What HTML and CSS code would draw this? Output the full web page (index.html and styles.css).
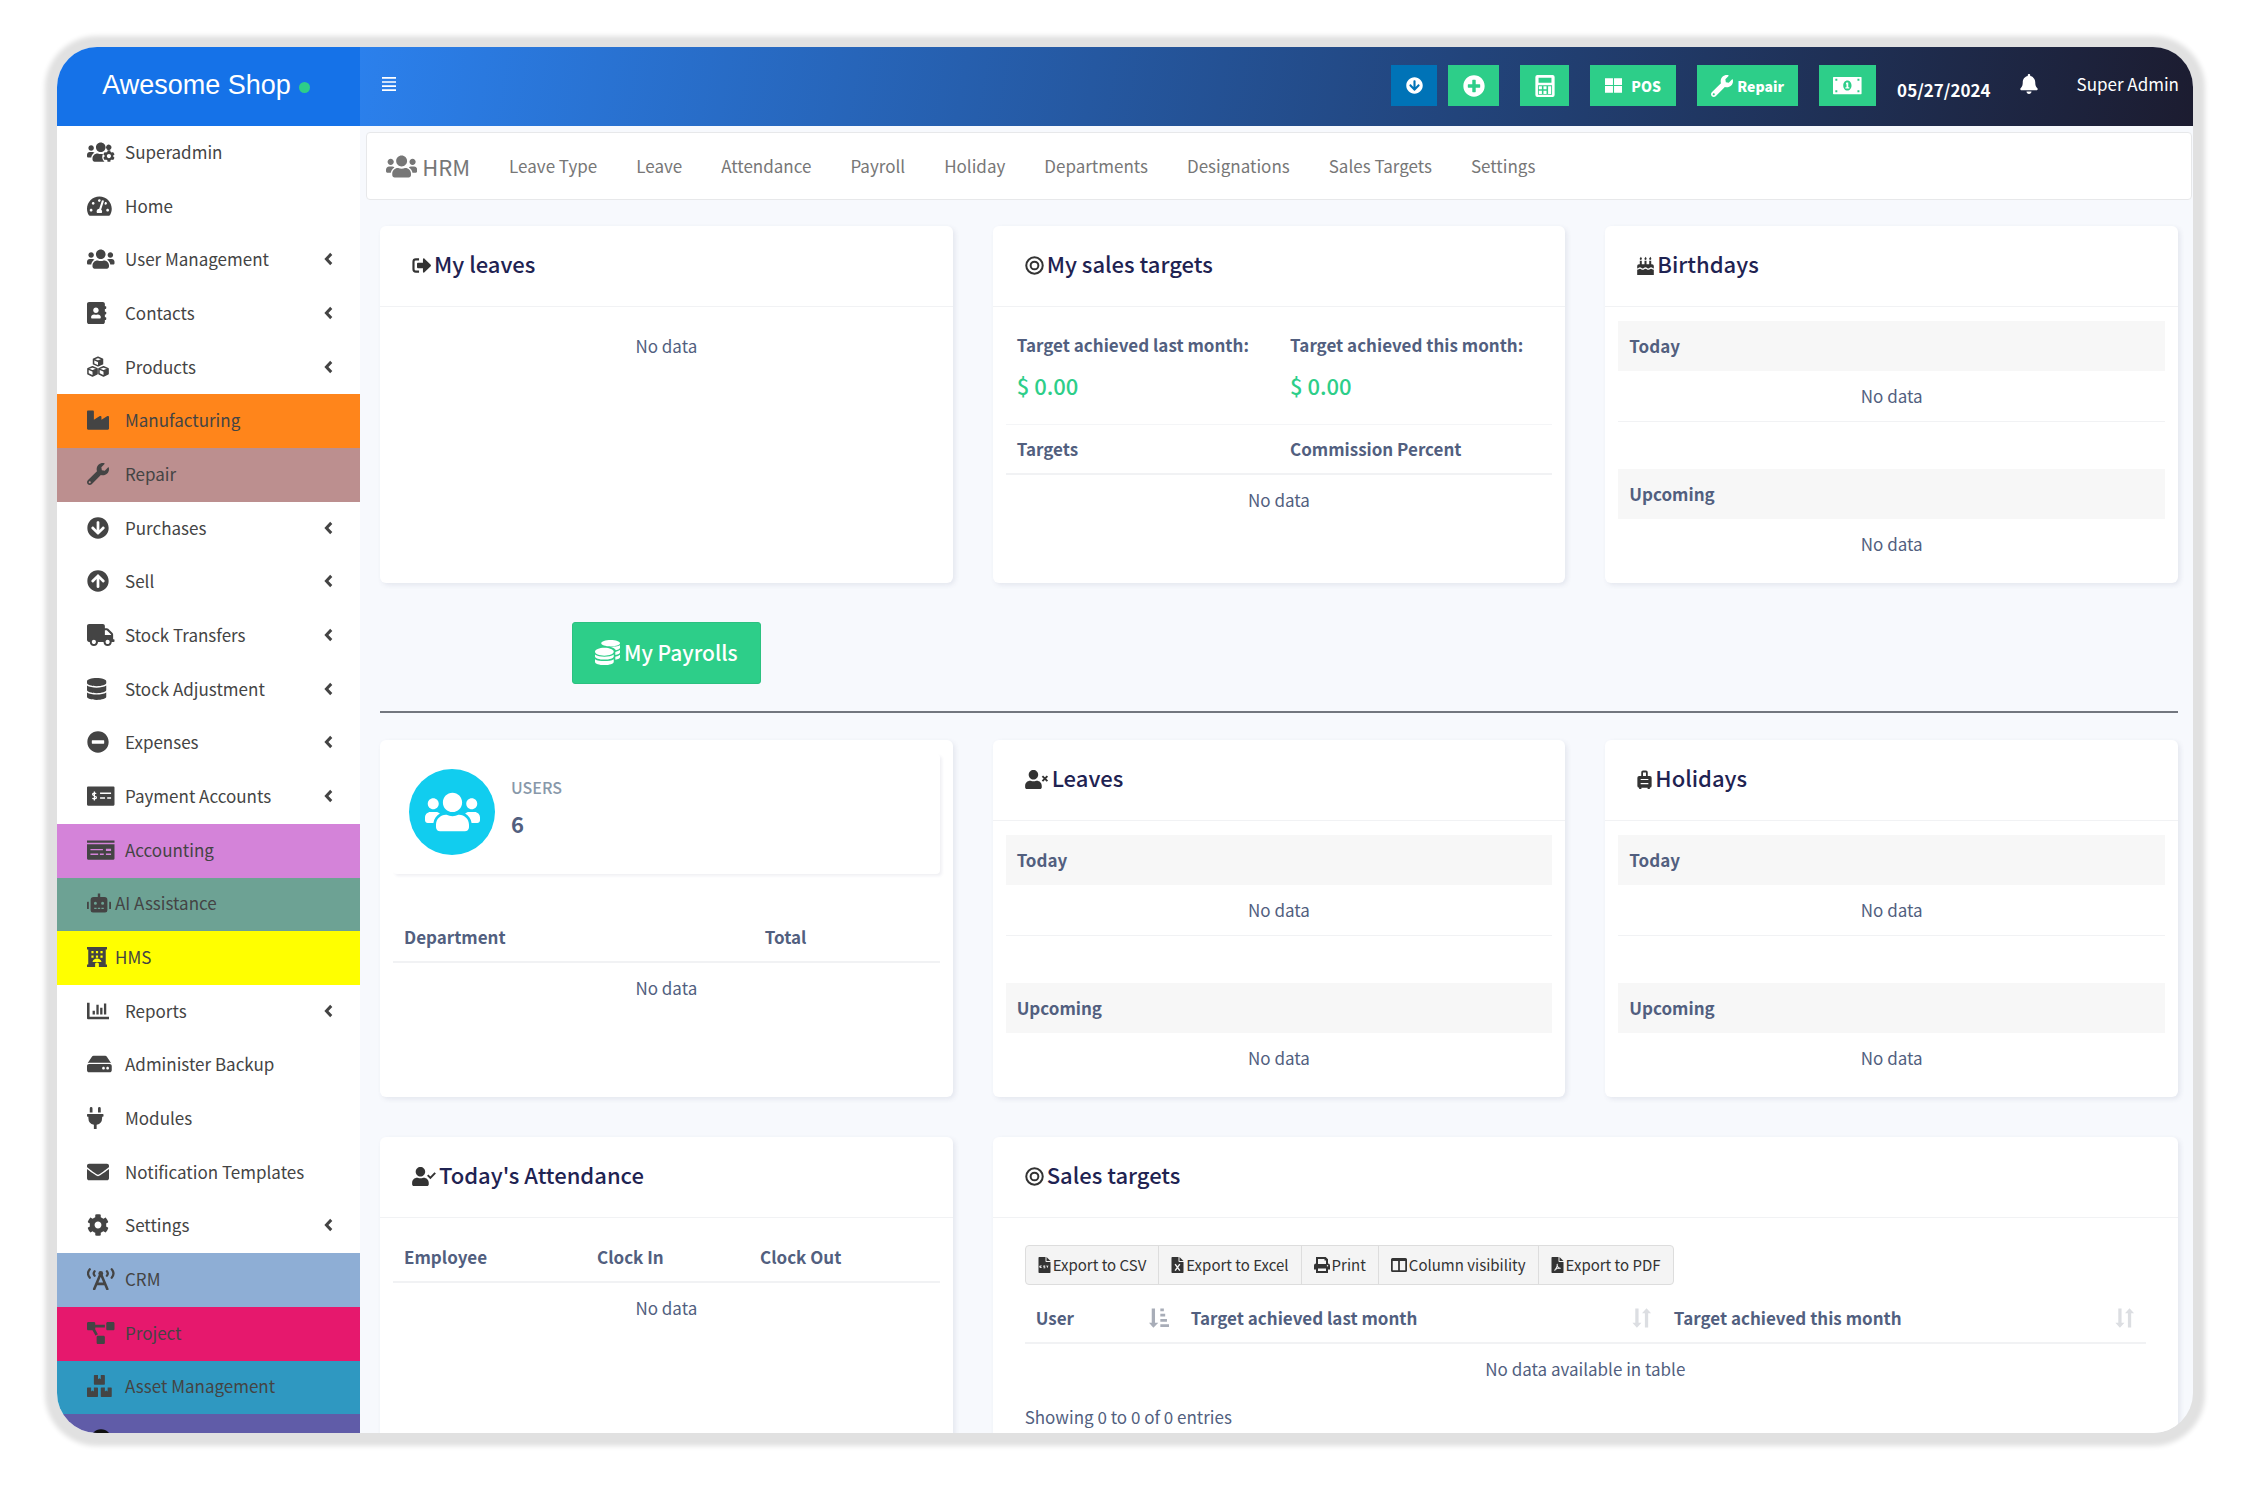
FILE: index.html
```html
<!DOCTYPE html>
<html lang="en">
<head>
<meta charset="utf-8">
<title>HRM - Awesome Shop</title>
<meta name="viewport" content="width=device-width, initial-scale=1">
<link rel="stylesheet" href="styles.css">
</head>
<body>
<svg class="sprite" aria-hidden="true">
  <symbol id="users" viewBox="0 0 640 512" preserveAspectRatio="xMinYMid meet"><path d="M96 224c35.3 0 64-28.7 64-64s-28.7-64-64-64-64 28.7-64 64 28.7 64 64 64zm448 0c35.3 0 64-28.7 64-64s-28.7-64-64-64-64 28.7-64 64 28.7 64 64 64zm32 32h-64c-17.6 0-33.5 7.1-45.1 18.6 40.3 22.1 68.9 62 75.1 109.4h66c17.7 0 32-14.3 32-32v-32c0-35.3-28.7-64-64-64zm-256 0c61.9 0 112-50.1 112-112S381.9 32 320 32 208 82.1 208 144s50.1 112 112 112zm76.8 32h-8.3c-20.8 10-43.9 16-68.5 16s-47.6-6-68.5-16h-8.3C179.6 288 128 339.6 128 403.2V432c0 26.5 21.5 48 48 48h288c26.5 0 48-21.5 48-48v-28.8c0-63.6-51.6-115.2-115.2-115.2zm-223.7-13.4C161.5 263.1 145.6 256 128 256H64c-35.3 0-64 28.7-64 64v32c0 17.7 14.3 32 32 32h65.9c6.3-47.4 34.9-87.3 75.2-109.4z"/></symbol>
  <symbol id="users-cog" viewBox="0 0 640 512" preserveAspectRatio="xMinYMid meet"><path d="M96 224c35.3 0 64-28.7 64-64s-28.7-64-64-64-64 28.7-64 64 28.7 64 64 64zM320 256c61.9 0 112-50.1 112-112S381.9 32 320 32 208 82.1 208 144s50.1 112 112 112zM173.1 274.6C161.5 263.1 145.6 256 128 256H64c-35.3 0-64 28.7-64 64v32c0 17.7 14.3 32 32 32h65.9c6.3-47.4 34.9-87.3 75.2-109.4zM370 300c-16 3-32 4-50 4-24.6 0-47.6-6-68.5-16h-8.3C179.6 288 128 339.6 128 403.2V432c0 26.5 21.5 48 48 48h230c-30-30-46-62-52-98 0-32 4-54 16-82zM544 96a64 64 0 1 0 0 104 64 64 0 0 0 0-104z"/><path transform="translate(372 212) scale(.54)" d="M487.4 315.7l-42.6-24.6c4.3-23.2 4.3-47 0-70.2l42.6-24.6c4.9-2.8 7.1-8.6 5.5-14-11.1-35.6-30-67.8-54.7-94.6-3.8-4.1-10-5.1-14.8-2.3L380.8 110c-17.9-15.4-38.5-27.3-60.8-35.1V25.8c0-5.6-3.9-10.5-9.4-11.7-36.7-8.2-74.3-7.8-109.2 0-5.5 1.2-9.4 6.1-9.4 11.7V75c-22.2 7.9-42.8 19.8-60.8 35.1L88.7 85.5c-4.9-2.8-11-1.9-14.8 2.3-24.7 26.7-43.6 58.9-54.7 94.6-1.7 5.4.6 11.2 5.5 14L67.3 221c-4.3 23.2-4.3 47 0 70.2l-42.6 24.6c-4.9 2.8-7.1 8.6-5.5 14 11.1 35.6 30 67.8 54.7 94.6 3.8 4.1 10 5.1 14.8 2.3l42.6-24.6c17.9 15.4 38.5 27.3 60.8 35.1v49.2c0 5.6 3.9 10.5 9.4 11.7 36.7 8.2 74.3 7.8 109.2 0 5.5-1.2 9.4-6.1 9.4-11.7v-49.2c22.2-7.9 42.8-19.8 60.8-35.1l42.6 24.6c4.9 2.8 11 1.9 14.8-2.3 24.7-26.7 43.6-58.9 54.7-94.6 1.5-5.5-.7-11.3-5.6-14.1zM256 346c-50 0-90-40-90-90s40-90 90-90 90 40 90 90-40 90-90 90z"/></symbol>
  <symbol id="gauge" viewBox="0 0 576 512" preserveAspectRatio="xMinYMid meet"><path d="M288 32C128.940 32 0 160.940 0 320c0 52.800 14.250 102.260 39.060 144.800 5.610 9.620 16.300 15.200 27.440 15.200h443c11.140 0 21.830-5.580 27.440-15.200C561.750 422.260 576 372.800 576 320c0-159.060-128.940-288-288-288zm0 64c14.710 0 26.580 10.130 30.320 23.650-1.110 2.260-2.640 4.230-3.450 6.670l-9.220 27.670c-5.130 3.490-10.970 6.010-17.640 6.010-17.670 0-32-14.330-32-32S270.330 96 288 96zM96 384c-17.670 0-32-14.330-32-32s14.330-32 32-32 32 14.330 32 32-14.330 32-32 32zm48-160c-17.670 0-32-14.330-32-32s14.330-32 32-32 32 14.330 32 32-14.330 32-32 32zm246.770-72.410l-61.330 184C343.130 347.330 352 364.540 352 384c0 11.720-3.380 22.550-8.880 32H232.880c-5.500-9.450-8.880-20.280-8.880-32 0-33.940 26.500-61.430 59.900-63.590l61.340-184.010c4.170-12.560 17.730-19.450 30.360-15.170 12.570 4.190 19.350 17.790 15.170 30.360zm14.660 57.200l15.520-46.550c3.470-1.290 7.130-2.230 11.050-2.230 17.670 0 32 14.330 32 32s-14.330 32-32 32c-11.380-.01-20.890-6.280-26.570-15.220zM480 384c-17.670 0-32-14.330-32-32s14.330-32 32-32 32 14.330 32 32-14.330 32-32 32z"/></symbol>
  <symbol id="address-book" viewBox="0 0 448 512" preserveAspectRatio="xMinYMid meet"><path d="M436 160c6.600 0 12-5.400 12-12v-40c0-6.600-5.400-12-12-12h-20V48c0-26.500-21.500-48-48-48H48C21.500 0 0 21.500 0 48v416c0 26.500 21.500 48 48 48h320c26.500 0 48-21.500 48-48v-48h20c6.600 0 12-5.400 12-12v-40c0-6.600-5.400-12-12-12h-20v-64h20c6.600 0 12-5.400 12-12v-40c0-6.600-5.400-12-12-12h-20v-64h20zm-228-32c35.300 0 64 28.700 64 64s-28.700 64-64 64-64-28.700-64-64 28.700-64 64-64zm112 236.800c0 10.600-10 19.200-22.400 19.200H118.400C106 384 96 375.400 96 364.800v-19.200c0-31.800 30.100-57.600 67.200-57.600h5c12.300 5.100 25.700 8 39.800 8s27.600-2.900 39.800-8h5c37.100 0 67.200 25.800 67.200 57.600v19.200z"/></symbol>
  <symbol id="cubes" viewBox="0 0 512 512" preserveAspectRatio="xMinYMid meet"><g fill="none" stroke="currentColor" stroke-width="36" stroke-linejoin="round"><path d="M256 30l104 42v112l-104 46-104-46V72zM152 78l104 44 104-44"/><path d="M128 250l106 44v118l-106 52-106-52V294zM22 300l106 46 106-46"/><path d="M384 250l106 44v118l-106 52-106-52V294zM278 300l106 46 106-46"/></g><path d="M256 126l104-46v104l-104 46zM128 350l106-48v110l-106 52zM384 350l106-48v110l-106 52z"/></symbol>
  <symbol id="industry" viewBox="0 0 512 512" preserveAspectRatio="xMinYMid meet"><path d="M475.115 163.781L336 252.309v-68.280c0-18.916-20.931-30.399-36.885-20.248L160 252.309V56c0-13.255-10.745-24-24-24H24C10.745 32 0 42.745 0 56v400c0 13.255 10.745 24 24 24h464c13.255 0 24-10.745 24-24V184.029c0-18.917-20.931-30.399-36.885-20.248z"/></symbol>
  <symbol id="wrench" viewBox="0 0 512 512" preserveAspectRatio="xMinYMid meet"><path d="M507.730 109.100c-2.240-9.030-13.540-12.090-20.120-5.510l-74.360 74.360-67.880-11.310-11.310-67.880 74.360-74.360c6.620-6.620 3.430-17.900-5.660-20.160-47.380-11.740-99.550.91-136.580 37.930-39.640 39.640-50.550 97.100-34.050 147.200L18.740 402.760c-24.990 24.990-24.990 65.510 0 90.500 24.990 24.990 65.510 24.990 90.500 0l213.210-213.210c50.120 16.710 107.470 5.680 147.370-34.220 37.070-37.070 49.700-89.320 37.910-136.730zM64 472c-13.250 0-24-10.750-24-24 0-13.260 10.750-24 24-24s24 10.740 24 24c0 13.250-10.750 24-24 24z"/></symbol>
  <symbol id="arrow-down" viewBox="0 0 512 512" preserveAspectRatio="xMinYMid meet"><path d="M504 256c0 137-111 248-248 248S8 393 8 256 119 8 256 8s248 111 248 248zm-143.600-28.900L288 302.600V120c0-13.300-10.700-24-24-24h-16c-13.300 0-24 10.700-24 24v182.600l-72.400-75.500c-9.300-9.700-24.800-9.900-34.300-.4l-10.900 11c-9.400 9.400-9.400 24.600 0 33.900L239 404.300c9.400 9.400 24.600 9.400 33.900 0l132.700-132.700c9.400-9.400 9.400-24.600 0-33.900l-10.900-11c-9.500-9.500-25-9.300-34.300.4z"/></symbol>
  <symbol id="arrow-up" viewBox="0 0 512 512" preserveAspectRatio="xMinYMid meet"><path transform="rotate(180 256 256)" d="M504 256c0 137-111 248-248 248S8 393 8 256 119 8 256 8s248 111 248 248zm-143.600-28.900L288 302.600V120c0-13.300-10.700-24-24-24h-16c-13.300 0-24 10.700-24 24v182.600l-72.400-75.500c-9.300-9.700-24.800-9.900-34.300-.4l-10.900 11c-9.400 9.400-9.400 24.600 0 33.900L239 404.300c9.400 9.400 24.600 9.400 33.900 0l132.700-132.700c9.400-9.400 9.400-24.600 0-33.900l-10.900-11c-9.500-9.500-25-9.300-34.300.4z"/></symbol>
  <symbol id="truck" viewBox="0 0 640 512" preserveAspectRatio="xMinYMid meet"><path d="M624 352h-16V243.900c0-12.700-5.100-24.900-14.100-33.900L494 110.100c-9-9-21.200-14.100-33.900-14.100H416V48c0-26.500-21.500-48-48-48H48C21.500 0 0 21.500 0 48v320c0 26.500 21.500 48 48 48h16c0 53 43 96 96 96s96-43 96-96h128c0 53 43 96 96 96s96-43 96-96h48c8.800 0 16-7.200 16-16v-32c0-8.800-7.200-16-16-16zM160 464c-26.500 0-48-21.500-48-48s21.500-48 48-48 48 21.500 48 48-21.500 48-48 48zm320 0c-26.500 0-48-21.500-48-48s21.500-48 48-48 48 21.500 48 48-21.500 48-48 48zm80-208H416V144h44.100l99.900 99.900V256z"/></symbol>
  <symbol id="database" viewBox="0 0 448 512" preserveAspectRatio="xMinYMid meet"><path d="M448 73.143v45.714C448 159.143 347.667 192 224 192S0 159.143 0 118.857V73.143C0 32.857 100.333 0 224 0s224 32.857 224 73.143zM448 176v102.857C448 319.143 347.667 352 224 352S0 319.143 0 278.857V176c48.125 33.143 136.208 48.572 224 48.572S399.874 209.143 448 176zm0 160v102.857C448 479.143 347.667 512 224 512S0 479.143 0 438.857V336c48.125 33.143 136.208 48.572 224 48.572S399.874 369.143 448 336z"/></symbol>
  <symbol id="minus" viewBox="0 0 512 512" preserveAspectRatio="xMinYMid meet"><path d="M256 8C119 8 8 119 8 256s111 248 248 248 248-111 248-248S393 8 256 8zM124 296c-6.600 0-12-5.400-12-12v-56c0-6.600 5.400-12 12-12h264c6.600 0 12 5.400 12 12v56c0 6.600-5.400 12-12 12H124z"/></symbol>
  <symbol id="plus" viewBox="0 0 512 512" preserveAspectRatio="xMinYMid meet"><path d="M256 8C119 8 8 119 8 256s111 248 248 248 248-111 248-248S393 8 256 8zm144 276c0 6.600-5.400 12-12 12h-92v92c0 6.600-5.400 12-12 12h-56c-6.600 0-12-5.400-12-12v-92h-92c-6.600 0-12-5.400-12-12v-56c0-6.600 5.400-12 12-12h92v-92c0-6.600 5.400-12 12-12h56c6.600 0 12 5.400 12 12v92h92c6.600 0 12 5.400 12 12v56z"/></symbol>
  <symbol id="check-money" viewBox="0 0 640 512" preserveAspectRatio="xMinYMid meet"><path fill-rule="evenodd" d="M24 32h592a24 24 0 0 1 24 24v400a24 24 0 0 1-24 24H24a24 24 0 0 1-24-24V56a24 24 0 0 1 24-24zM304 176v36h256v-36zM304 286v36h116v-36zM470 286v36h90v-36z"/><path d="M214 200c-14-16-84-22-84 18 0 42 88 22 88 70 0 40-76 38-92 16M172 150v210" fill="none" stroke="#fff" stroke-width="30"/></symbol>
  <symbol id="money-check" viewBox="0 0 640 512" preserveAspectRatio="xMinYMid meet"><path fill-rule="evenodd" d="M0 32h640v56H0zM0 122h640v334a24 24 0 0 1-24 24H24a24 24 0 0 1-24-24zM80 230v32h290v-32zM80 340v32h180v-32zM300 340v32h90v-32zM440 224v56h120v-56zM440 340v32h120v-32z"/></symbol>
  <symbol id="robot" viewBox="0 0 640 512" preserveAspectRatio="xMinYMid meet"><path fill-rule="evenodd" d="M16 224h32v192H16a16 16 0 0 1-16-16V240a16 16 0 0 1 16-16zM592 224h32a16 16 0 0 1 16 16v160a16 16 0 0 1-16 16h-32zM288 0h64v96h112a80 80 0 0 1 80 80v272a64 64 0 0 1-64 64H160a64 64 0 0 1-64-64V176a80 80 0 0 1 80-80h112zM224 224a40 40 0 1 0 0 80 40 40 0 0 0 0-80zM416 224a40 40 0 1 0 0 80 40 40 0 0 0 0-80zM192 384v32h64v-32zM288 384v32h64v-32zM384 384v32h64v-32z"/></symbol>
  <symbol id="hotel" viewBox="0 0 512 512" preserveAspectRatio="xMinYMid meet"><path fill-rule="evenodd" d="M0 0h512v64h-32v384h32v64H304v-90c-18-30-78-30-96 0v90H0v-64h32V64H0zM112 104v56h56v-56zM228 104v56h56v-56zM344 104v56h56v-56zM112 216v56h56v-56zM228 216v56h56v-56zM344 216v56h56v-56zM140 384h232c-10-60-60-92-116-92s-106 32-116 92z"/></symbol>
  <symbol id="chart" viewBox="0 0 512 512" preserveAspectRatio="xMinYMid meet"><path d="M0 64h60v324h452v60H24a24 24 0 0 1-24-24zM130 250h54v90h-54zM218 110h54v230h-54zM306 180h54v160h-54zM394 80h54v260h-54z"/></symbol>
  <symbol id="hdd" viewBox="0 0 576 512" preserveAspectRatio="xMinYMid meet"><path d="M576 304v96c0 26.510-21.490 48-48 48H48c-26.510 0-48-21.490-48-48v-96c0-26.510 21.490-48 48-48h480c26.510 0 48 21.490 48 48zm-48-80a79.557 79.557 0 0 1 30.777 6.165L462.250 85.374A48.003 48.003 0 0 0 422.311 64H153.689a48 48 0 0 0-39.938 21.374L17.223 230.165A79.557 79.557 0 0 1 48 224h480zm-48 96c-17.673 0-32 14.327-32 32s14.327 32 32 32 32-14.327 32-32-14.327-32-32-32zm-96 0c-17.673 0-32 14.327-32 32s14.327 32 32 32 32-14.327 32-32-14.327-32-32-32z"/></symbol>
  <symbol id="plug" viewBox="0 0 384 512" preserveAspectRatio="xMinYMid meet"><path d="M320 32a32 32 0 0 0-64 0v96h64zm48 128H16a16 16 0 0 0-16 16v32a16 16 0 0 0 16 16h16v32a160.070 160.070 0 0 0 128 156.800V512h64v-99.200A160.070 160.070 0 0 0 352 256v-32h16a16 16 0 0 0 16-16v-32a16 16 0 0 0-16-16zM128 32a32 32 0 0 0-64 0v96h64z"/></symbol>
  <symbol id="envelope" viewBox="0 0 512 512" preserveAspectRatio="xMinYMid meet"><path d="M502.300 190.800c3.900-3.100 9.700-.2 9.700 4.700V400c0 26.500-21.500 48-48 48H48c-26.500 0-48-21.500-48-48V195.600c0-5 5.700-7.800 9.700-4.700 22.400 17.400 52.100 39.500 154.100 113.600 21.100 15.400 56.700 47.800 92.200 47.600 35.700.3 72-32.800 92.300-47.600 102-74.100 131.600-96.300 154-113.700zM256 320c23.200.4 56.600-29.200 73.400-41.400 132.700-96.300 142.800-104.700 173.400-128.700 5.800-4.500 9.200-11.500 9.200-18.900v-19c0-26.500-21.500-48-48-48H48c-26.500 0-48 21.500-48 48v19c0 7.400 3.400 14.300 9.200 18.900 30.600 23.900 40.700 32.400 173.400 128.700 16.800 12.200 50.200 41.800 73.400 41.400z"/></symbol>
  <symbol id="cog" viewBox="0 0 512 512" preserveAspectRatio="xMinYMid meet"><path d="M487.400 315.700l-42.600-24.600c4.300-23.200 4.300-47 0-70.200l42.600-24.600c4.900-2.800 7.100-8.600 5.500-14-11.100-35.600-30-67.800-54.700-94.600-3.800-4.100-10-5.100-14.800-2.300L380.800 110c-17.900-15.400-38.500-27.300-60.800-35.100V25.800c0-5.600-3.900-10.500-9.400-11.700-36.700-8.200-74.300-7.800-109.200 0-5.500 1.200-9.400 6.100-9.400 11.700V75c-22.200 7.900-42.800 19.800-60.800 35.100L88.700 85.500c-4.900-2.800-11-1.900-14.800 2.300-24.700 26.700-43.600 58.900-54.700 94.600-1.700 5.400.6 11.200 5.500 14L67.300 221c-4.300 23.200-4.300 47 0 70.200l-42.600 24.600c-4.900 2.800-7.100 8.600-5.500 14 11.100 35.600 30 67.800 54.700 94.600 3.800 4.100 10 5.100 14.800 2.300l42.600-24.600c17.900 15.400 38.500 27.300 60.800 35.100v49.200c0 5.600 3.900 10.500 9.400 11.700 36.700 8.200 74.300 7.800 109.200 0 5.500-1.200 9.400-6.100 9.400-11.700v-49.200c22.200-7.900 42.800-19.800 60.800-35.100l42.600 24.600c4.900 2.800 11 1.900 14.800-2.300 24.700-26.700 43.600-58.900 54.700-94.600 1.500-5.500-.7-11.300-5.600-14.100zM256 336c-44.100 0-80-35.900-80-80s35.900-80 80-80 80 35.900 80 80-35.900 80-80 80z"/></symbol>
  <symbol id="tower" viewBox="0 0 640 512" preserveAspectRatio="xMinYMid meet"><g fill="none" stroke="currentColor" stroke-width="52" stroke-linecap="round"><path d="M66 30c-52 60-52 136 0 196M574 30c52 60 52 136 0 196M178 76c-26 30-26 74 0 104M462 76c26 30 26 74 0 104"/><path d="M320 130L168 490M320 130l152 360M232 370h176" stroke-width="60"/></g><circle cx="320" cy="128" r="56"/></symbol>
  <symbol id="diagram" viewBox="0 0 640 512" preserveAspectRatio="xMinYMid meet"><path d="M384 320H256c-17.670 0-32 14.330-32 32v128c0 17.670 14.330 32 32 32h128c17.670 0 32-14.330 32-32V352c0-17.670-14.330-32-32-32zM192 32c0-17.670-14.330-32-32-32H32C14.330 0 0 14.330 0 32v128c0 17.670 14.330 32 32 32h95.720l73.160 128.040C211.980 300.980 232.400 288 256 288h.28L192 175.510V128h224V64H192V32zM608 0H480c-17.670 0-32 14.330-32 32v128c0 17.670 14.330 32 32 32h128c17.670 0 32-14.330 32-32V32c0-17.670-14.330-32-32-32z"/></symbol>
  <symbol id="boxes" viewBox="0 0 576 512" preserveAspectRatio="xMinYMid meet"><path d="M560 288h-80v96l-32-21.300-32 21.300v-96h-80c-8.800 0-16 7.200-16 16v192c0 8.800 7.200 16 16 16h224c8.800 0 16-7.200 16-16V304c0-8.800-7.200-16-16-16zm-384-64h224c8.800 0 16-7.200 16-16V16c0-8.800-7.200-16-16-16h-80v96l-32-21.300L256 96V0h-80c-8.800 0-16 7.200-16 16v192c0 8.800 7.200 16 16 16zm64 64h-80v96l-32-21.300L96 384v-96H16c-8.800 0-16 7.200-16 16v192c0 8.800 7.200 16 16 16h224c8.800 0 16-7.200 16-16V304c0-8.800-7.200-16-16-16z"/></symbol>
  <symbol id="disc" viewBox="0 0 576 512"><circle cx="288" cy="256" r="248"/></symbol>
  <symbol id="chevron" viewBox="0 0 256 512"><path d="M206 110L68 256l138 146" fill="none" stroke="currentColor" stroke-width="84"/></symbol>
  <symbol id="bars" viewBox="0 0 448 512"><path d="M0 34h448v54H0zM0 165h448v54H0zM0 296h448v54H0zM0 427h448v54H0z"/></symbol>
  <symbol id="calculator" viewBox="0 0 448 512"><path fill-rule="evenodd" d="M48 0h352a48 48 0 0 1 48 48v416a48 48 0 0 1-48 48H48a48 48 0 0 1-48-48V48A48 48 0 0 1 48 0zM74 64v116h300V64zM60 240v220h328V240z"/><path d="M80 260h72v72H80zM188 260h72v72h-72zM296 260h72v180h-72zM80 366h72v74H80zM188 366h72v74h-72z"/></symbol>
  <symbol id="grid" viewBox="0 0 512 512"><path d="M0 40h240v200H0zM272 40h240v200H272zM0 272h240v200H0zM272 272h240v200H272z"/></symbol>
  <symbol id="banknote" viewBox="0 0 640 512"><path fill-rule="evenodd" d="M16 64h608a16 16 0 0 1 16 16v352a16 16 0 0 1-16 16H16a16 16 0 0 1-16-16V80a16 16 0 0 1 16-16zM320 144c-54 0-92 50-92 112s38 112 92 112 92-50 92-112-38-112-92-112zM52 108v40h44v-40zM544 108v40h44v-40zM52 364v40h44v-40zM544 364v40h44v-40z"/><path d="M296 190h44v104h24v30h-88v-30h24v-66h-16z"/></symbol>
  <symbol id="bell" viewBox="0 0 448 512"><path d="M224 512c35.320 0 63.970-28.650 63.970-64H160.030c0 35.350 28.650 64 63.970 64zm215.390-149.710c-19.320-20.760-55.470-51.990-55.470-154.290 0-77.700-54.480-139.900-127.940-155.160V32c0-17.670-14.320-32-31.980-32s-31.980 14.330-31.980 32v20.840C118.560 68.100 64.080 130.300 64.080 208c0 102.300-36.150 133.530-55.470 154.290-6 6.450-8.660 14.160-8.610 21.710.11 16.400 12.980 32 32.100 32h383.800c19.120 0 32-15.600 32.100-32 .05-7.550-2.610-15.270-8.610-21.710z"/></symbol>
  <symbol id="sign-out" viewBox="0 0 512 512"><path d="M190 92H104a64 64 0 0 0-64 64v200a64 64 0 0 0 64 64h86" fill="none" stroke="currentColor" stroke-width="58"/><path d="M504 273L336 441c-15 15-41 4.500-41-17v-96H159c-13 0-24-11-24-24v-96c0-13 11-24 24-24h136V88c0-21.500 26-32 41-17l168 168c9.500 9.500 9.500 24.500 0 34z"/></symbol>
  <symbol id="target" viewBox="0 0 512 512"><g fill="none" stroke="currentColor" stroke-width="54"><circle cx="256" cy="256" r="222"/><circle cx="256" cy="256" r="104"/></g></symbol>
  <symbol id="cake" viewBox="0 0 448 512"><path d="M70 130h54v120H70zM197 130h54v120h-54zM324 130h54v120h-54zM97 20c26 32 30 44 30 56a30 30 0 0 1-60 0c0-16 22-26 30-56zM224 20c26 32 30 44 30 56a30 30 0 0 1-60 0c0-16 22-26 30-56zM351 20c26 32 30 44 30 56a30 30 0 0 1-60 0c0-16 22-26 30-56zM48 224h352a48 48 0 0 1 48 48v62c-40 0-40-30-75-30s-35 30-74 30-40-30-75-30-35 30-75 30-40-30-74-30-35 30-75 30v-62a48 48 0 0 1 48-48zM0 368c40 0 44-26 75-26s35 28 74 28 44-28 75-28 35 28 75 28 44-28 74-28 35 26 75 26v144H0z"/></symbol>
  <symbol id="coins" viewBox="0 0 512 512"><path d="M320 0c106 0 192 28.700 192 64s-86 64-192 64-192-28.700-192-64S214 0 320 0zM192 160c106 0 192 36 192 80s-86 80-192 80S0 284 0 240s86-80 192-80zM0 298c41 30 117 46 192 46s151-16 192-46v38c0 35-86 64-192 64S0 371 0 336zM0 392c41 30 117 40 192 40s151-10 192-40v56c0 35-86 64-192 64S0 483 0 448zM512 108v52c0 20-34 42-84 50-20-36-70-58-128-70 90-1 170-8 212-32zM512 206v50c0 20-34 40-96 52v-64c40-8 72-20 96-38zM512 302v50c0 20-34 40-96 52v-60c40-8 72-22 96-42z"/></symbol>
  <symbol id="user-times" viewBox="0 0 640 512"><path d="M224 256c70.700 0 128-57.300 128-128S294.700 0 224 0 96 57.300 96 128s57.300 128 128 128zm89.600 32h-16.700c-22.200 10.200-46.900 16-72.900 16s-50.600-5.800-72.900-16h-16.700C60.200 288 0 348.200 0 422.400V464c0 26.500 21.500 48 48 48h352c26.500 0 48-21.500 48-48v-41.600c0-74.200-60.200-134.400-134.400-134.400z"/><path d="M466 166l134 134M600 166L466 300" fill="none" stroke="currentColor" stroke-width="52"/></symbol>
  <symbol id="user-check" viewBox="0 0 640 512"><path d="M224 256c70.700 0 128-57.300 128-128S294.700 0 224 0 96 57.300 96 128s57.300 128 128 128zm89.600 32h-16.700c-22.200 10.200-46.900 16-72.900 16s-50.600-5.800-72.900-16h-16.700C60.200 288 0 348.200 0 422.400V464c0 26.500 21.500 48 48 48h352c26.500 0 48-21.500 48-48v-41.600c0-74.200-60.200-134.400-134.400-134.400z"/><path d="M420 220l72 72 130-134" fill="none" stroke="currentColor" stroke-width="54"/></symbol>
  <symbol id="suitcase" viewBox="0 0 384 512"><path fill-rule="evenodd" d="M104 160V72c0-30 20-56 50-56h76c30 0 50 26 50 56v88h56a48 48 0 0 1 48 48v224a48 48 0 0 1-48 48v32h-60v-32H108v32H48v-32a48 48 0 0 1-48-48V208a48 48 0 0 1 48-48zM152 64v96h80V64zM88 240v32h208v-32zM88 352v32h208v-32z"/></symbol>
  <symbol id="file-csv" viewBox="0 0 384 512"><path fill-rule="evenodd" d="M24 0h200v136a24 24 0 0 0 24 24h136v328a24 24 0 0 1-24 24H24a24 24 0 0 1-24-24V24A24 24 0 0 1 24 0zM256 0l128 128H256zM72 270a40 40 0 0 0-12 84h44v-24H72v-36h32v-24zM156 270v52h36v12h-36v22h60v-54h-32v-10h32v-22zM250 270l34 86 34-86h-26l-8 30-8-30z"/></symbol>
  <symbol id="file-excel" viewBox="0 0 384 512"><path d="M24 0h200v136a24 24 0 0 0 24 24h136v328a24 24 0 0 1-24 24H24a24 24 0 0 1-24-24V24A24 24 0 0 1 24 0zM256 0l128 128H256z"/><path d="M116 226l150 210M266 226L116 436" fill="none" stroke="#f4f4f4" stroke-width="46"/></symbol>
  <symbol id="file-pdf" viewBox="0 0 384 512"><path d="M24 0h200v136a24 24 0 0 0 24 24h136v328a24 24 0 0 1-24 24H24a24 24 0 0 1-24-24V24A24 24 0 0 1 24 0zM256 0l128 128H256z"/><path d="M180 220c20 60-30 150-82 214M176 270c30 80 60 100 120 90M112 400c50-30 90-40 150-42" fill="none" stroke="#f4f4f4" stroke-width="34"/></symbol>
  <symbol id="print" viewBox="0 0 512 512"><path fill-rule="evenodd" d="M64 0h310l74 74v134a64 64 0 0 1 64 64v128h-64v112H64V400H0V272a64 64 0 0 1 64-64zM128 64v160h256V112h-48V64zM128 370v78h256v-78zM432 258a24 24 0 1 0 0 48 24 24 0 0 0 0-48z"/></symbol>
  <symbol id="columns" viewBox="0 0 512 512"><path fill-rule="evenodd" d="M48 32h416a48 48 0 0 1 48 48v352a48 48 0 0 1-48 48H48a48 48 0 0 1-48-48V80a48 48 0 0 1 48-48zM56 130v296h172V130zM284 130v296h172V130z"/></symbol>
  <symbol id="sort-asc" viewBox="0 0 512 512"><path d="M70 10h84v370h84L112 505 0 380h70zM290 10h90v74h-90zM290 145h124v74H290zM290 280h170v74H290zM290 415h222v74H290z"/></symbol>
  <symbol id="sort-both" viewBox="0 0 512 512"><path d="M84 10h84v370h74L126 505 10 380h74zM330 500h84V132h74L372 7 256 132h74z"/></symbol>
</svg>

<div class="window">
  <header class="topbar">
    <a class="brand" href="#">Awesome Shop <span class="status"></span></a>
    <div class="topbar-main">
      <button class="menu-toggle" type="button" aria-label="Toggle navigation"><svg class="ico"><use href="#bars"/></svg></button>
      <div class="tools">
        <button class="tool tool-blue" type="button" aria-label="Download"><svg class="ico ico-sm"><use href="#arrow-down"/></svg></button>
        <button class="tool tool-add" type="button" aria-label="Add"><svg class="ico"><use href="#plus"/></svg></button>
        <button class="tool tool-calc" type="button" aria-label="Calculator"><svg class="ico"><use href="#calculator"/></svg></button>
        <button class="tool tool-pos" type="button"><svg class="ico ico-sm"><use href="#grid"/></svg>POS</button>
        <button class="tool tool-repair" type="button"><svg class="ico"><use href="#wrench"/></svg>Repair</button>
        <button class="tool tool-cash" type="button" aria-label="Cash register"><svg class="ico wide"><use href="#banknote"/></svg></button>
      </div>
      <span class="date">05/27/2024</span>
      <button class="bell" type="button" aria-label="Notifications"><svg class="ico"><use href="#bell"/></svg></button>
      <a class="account" href="#">Super Admin</a>
    </div>
  </header>

  <div class="shell">
    <nav class="sidebar" aria-label="Main">
      <ul class="menu">
        <li><a href="#"><svg class="ico"><use href="#users-cog"/></svg><span>Superadmin</span></a></li>
        <li><a href="#"><svg class="ico"><use href="#gauge"/></svg><span>Home</span></a></li>
        <li><a href="#"><svg class="ico"><use href="#users"/></svg><span>User Management</span><svg class="arrow"><use href="#chevron"/></svg></a></li>
        <li><a href="#"><svg class="ico"><use href="#address-book"/></svg><span>Contacts</span><svg class="arrow"><use href="#chevron"/></svg></a></li>
        <li><a href="#"><svg class="ico"><use href="#cubes"/></svg><span>Products</span><svg class="arrow"><use href="#chevron"/></svg></a></li>
        <li class="orange"><a href="#"><svg class="ico"><use href="#industry"/></svg><span>Manufacturing</span></a></li>
        <li class="rose"><a href="#"><svg class="ico"><use href="#wrench"/></svg><span>Repair</span></a></li>
        <li><a href="#"><svg class="ico"><use href="#arrow-down"/></svg><span>Purchases</span><svg class="arrow"><use href="#chevron"/></svg></a></li>
        <li><a href="#"><svg class="ico"><use href="#arrow-up"/></svg><span>Sell</span><svg class="arrow"><use href="#chevron"/></svg></a></li>
        <li><a href="#"><svg class="ico"><use href="#truck"/></svg><span>Stock Transfers</span><svg class="arrow"><use href="#chevron"/></svg></a></li>
        <li><a href="#"><svg class="ico"><use href="#database"/></svg><span>Stock Adjustment</span><svg class="arrow"><use href="#chevron"/></svg></a></li>
        <li><a href="#"><svg class="ico"><use href="#minus"/></svg><span>Expenses</span><svg class="arrow"><use href="#chevron"/></svg></a></li>
        <li><a href="#"><svg class="ico"><use href="#check-money"/></svg><span>Payment Accounts</span><svg class="arrow"><use href="#chevron"/></svg></a></li>
        <li class="orchid"><a href="#"><svg class="ico"><use href="#money-check"/></svg><span>Accounting</span></a></li>
        <li class="sage tight"><a href="#"><svg class="ico"><use href="#robot"/></svg><span>AI Assistance</span></a></li>
        <li class="yellow tight"><a href="#"><svg class="ico"><use href="#hotel"/></svg><span>HMS</span></a></li>
        <li><a href="#"><svg class="ico"><use href="#chart"/></svg><span>Reports</span><svg class="arrow"><use href="#chevron"/></svg></a></li>
        <li><a href="#"><svg class="ico"><use href="#hdd"/></svg><span>Administer Backup</span></a></li>
        <li><a href="#"><svg class="ico"><use href="#plug"/></svg><span>Modules</span></a></li>
        <li><a href="#"><svg class="ico"><use href="#envelope"/></svg><span>Notification Templates</span></a></li>
        <li><a href="#"><svg class="ico"><use href="#cog"/></svg><span>Settings</span><svg class="arrow"><use href="#chevron"/></svg></a></li>
        <li class="steel"><a href="#"><svg class="ico"><use href="#tower"/></svg><span>CRM</span></a></li>
        <li class="pink"><a href="#"><svg class="ico"><use href="#diagram"/></svg><span>Project</span></a></li>
        <li class="teal"><a href="#"><svg class="ico"><use href="#boxes"/></svg><span>Asset Management</span></a></li>
        <li class="violet"><a href="#"><svg class="ico"><use href="#disc"/></svg></a></li>
      </ul>
    </nav>

    <main class="content">
      <nav class="subnav" aria-label="HRM">
        <a class="subnav-brand" href="#"><svg class="ico wide"><use href="#users"/></svg>HRM</a>
        <a href="#">Leave Type</a><a href="#">Leave</a><a href="#">Attendance</a><a href="#">Payroll</a><a href="#">Holiday</a><a href="#">Departments</a><a href="#">Designations</a><a href="#">Sales Targets</a><a href="#">Settings</a>
      </nav>

      <div class="board">
        <section class="card">
          <h2 class="card-title"><svg class="ico"><use href="#sign-out"/></svg>My leaves</h2>
          <div class="card-body">
            <table class="grid"><tbody><tr><td class="none">No data</td></tr></tbody></table>
          </div>
        </section>

        <section class="card">
          <h2 class="card-title"><svg class="ico"><use href="#target"/></svg>My sales targets</h2>
          <div class="card-body">
            <table class="grid">
              <tbody>
                <tr class="totals">
                  <td><b>Target achieved last month:</b><span class="amount">$ 0.00</span></td>
                  <td><b>Target achieved this month:</b><span class="amount">$ 0.00</span></td>
                </tr>
                <tr class="heads"><th scope="col">Targets</th><th scope="col">Commission Percent</th></tr>
                <tr><td class="none" colspan="2">No data</td></tr>
              </tbody>
            </table>
          </div>
        </section>

        <section class="card">
          <h2 class="card-title"><svg class="ico narrow"><use href="#cake"/></svg>Birthdays</h2>
          <div class="card-body">
            <table class="grid">
              <tbody>
                <tr class="band"><th scope="row">Today</th></tr>
                <tr><td class="none">No data</td></tr>
                <tr class="spacer"><td></td></tr>
                <tr class="band"><th scope="row">Upcoming</th></tr>
                <tr><td class="none">No data</td></tr>
              </tbody>
            </table>
          </div>
        </section>

        <div class="payroll"><button class="btn-payroll" type="button"><svg class="ico"><use href="#coins"/></svg>My Payrolls</button></div>
        <hr class="divider">

        <section class="card">
          <div class="card-body">
            <div class="stat">
              <span class="stat-icon"><svg class="ico wide"><use href="#users"/></svg></span>
              <div class="stat-text"><span class="stat-label">USERS</span><span class="stat-value">6</span></div>
            </div>
            <table class="grid">
              <thead><tr class="heads"><th scope="col" class="col-department">Department</th><th scope="col">Total</th></tr></thead>
              <tbody><tr><td class="none" colspan="2">No data</td></tr></tbody>
            </table>
          </div>
        </section>

        <section class="card">
          <h2 class="card-title"><svg class="ico mid"><use href="#user-times"/></svg>Leaves</h2>
          <div class="card-body">
            <table class="grid">
              <tbody>
                <tr class="band"><th scope="row">Today</th></tr>
                <tr><td class="none">No data</td></tr>
                <tr class="spacer"><td></td></tr>
                <tr class="band"><th scope="row">Upcoming</th></tr>
                <tr><td class="none">No data</td></tr>
              </tbody>
            </table>
          </div>
        </section>

        <section class="card">
          <h2 class="card-title"><svg class="ico slim"><use href="#suitcase"/></svg>Holidays</h2>
          <div class="card-body">
            <table class="grid">
              <tbody>
                <tr class="band"><th scope="row">Today</th></tr>
                <tr><td class="none">No data</td></tr>
                <tr class="spacer"><td></td></tr>
                <tr class="band"><th scope="row">Upcoming</th></tr>
                <tr><td class="none">No data</td></tr>
              </tbody>
            </table>
          </div>
        </section>

        <section class="card row-last">
          <h2 class="card-title"><svg class="ico mid"><use href="#user-check"/></svg>Today's Attendance</h2>
          <div class="card-body">
            <table class="grid">
              <thead><tr class="heads"><th scope="col" class="col-employee">Employee</th><th scope="col" class="col-in">Clock In</th><th scope="col">Clock Out</th></tr></thead>
              <tbody><tr><td class="none" colspan="3">No data</td></tr></tbody>
            </table>
          </div>
        </section>

        <section class="card card-wide row-last">
          <h2 class="card-title"><svg class="ico"><use href="#target"/></svg>Sales targets</h2>
          <div class="card-body sales">
            <div class="exports">
              <button type="button"><svg class="ico slim"><use href="#file-csv"/></svg>Export to CSV</button>
              <button type="button"><svg class="ico slim"><use href="#file-excel"/></svg>Export to Excel</button>
              <button type="button"><svg class="ico"><use href="#print"/></svg>Print</button>
              <button type="button"><svg class="ico"><use href="#columns"/></svg>Column visibility</button>
              <button type="button"><svg class="ico slim"><use href="#file-pdf"/></svg>Export to PDF</button>
            </div>
            <table class="grid sortable">
              <thead><tr class="heads">
                <th scope="col" class="col-user"><div>User<svg class="sort on"><use href="#sort-asc"/></svg></div></th>
                <th scope="col"><div>Target achieved last month<svg class="sort"><use href="#sort-both"/></svg></div></th>
                <th scope="col"><div>Target achieved this month<svg class="sort"><use href="#sort-both"/></svg></div></th>
              </tr></thead>
              <tbody><tr><td class="none" colspan="3">No data available in table</td></tr></tbody>
            </table>
            <p class="summary">Showing 0 to 0 of 0 entries</p>
          </div>
        </section>
      </div>
    </main>
  </div>
</div>
</body>
</html>
```
FILE: styles.css
```css
* { box-sizing: border-box; }

body {
  margin: 0;
  padding: 47px 57px 67px;
  height: 100vh;
  overflow: hidden;
  background: #fff;
  color: #525f7f;
  font-family: "Noto Sans CJK SC", "Noto Sans", sans-serif;
  font-size: 17px;
  line-height: 24px;
}

a { color: inherit; text-decoration: none; }
button { font: inherit; color: inherit; border: 0; background: none; padding: 0; cursor: pointer; }

.sprite { position: absolute; width: 0; height: 0; }
.ico { width: 1em; height: 1em; fill: currentColor; flex: none; }
.ico.wide { width: 1.25em; }

.window {
  display: flex;
  flex-direction: column;
  height: 100%;
  overflow: hidden;
  border-radius: 40px;
  background: #f7f9fd;
  box-shadow: 0 1px 5px 12px #e1e1e1;
}

/* Top bar */
.topbar { display: flex; flex: none; height: 79px; color: #fff; }
.brand {
  display: flex;
  flex: none;
  align-items: center;
  justify-content: center;
  gap: 8px;
  width: 303px;
  padding: 0 5px 4px 0;
  background: #1572e8;
  font: 27px/32px "Liberation Sans", Arial, sans-serif;
}
.status { width: 11px; height: 11px; margin-top: 5px; border-radius: 50%; background: #2dce89; }
.topbar-main {
  display: flex;
  flex: 1;
  align-items: center;
  padding: 0 14px 6px 21px;
  background: linear-gradient(100deg, #2b80ec, #1c1c30);
}
.menu-toggle { display: flex; margin-right: auto; font-size: 16px; }
.tools { display: flex; gap: 21px; margin: 4px 21px 0 0; }
.tool {
  display: flex;
  align-items: center;
  justify-content: center;
  gap: 9px;
  height: 41px;
  background: #2dce89;
  font-size: 14px;
  font-weight: 900;
}
.tool .ico { font-size: 22px; }
.tool .ico.ico-sm { font-size: 17px; }
.tool .ico.wide { font-size: 23px; }
.tool-blue { width: 46px; margin-right: -10px; background: #0073b7; }
.tool-add { width: 51px; }
.tool-calc { width: 49px; }
.tool-pos { width: 86px; }
.tool-repair { width: 101px; gap: 4px; }
.tool-cash { width: 57px; }
.date { margin-right: 28px; padding-top: 12px; font-weight: 700; }
.bell { display: flex; margin-right: 38px; font-size: 20px; }
.account { font-size: 17px; }

/* Sidebar */
.shell { display: flex; flex: 1; min-height: 0; }
.sidebar { flex: none; width: 303px; background: #fff; color: #444; }
.menu {
  display: grid;
  grid-auto-rows: 1fr;
  height: 1342px;
  margin: 0;
  padding: 0;
  list-style: none;
}
.menu a { display: flex; align-items: center; height: 100%; padding: 0 27px 2px 30px; }
.menu .ico { width: 28px; margin-right: 10px; font-size: 22px; }
.arrow { width: 9px; height: 18px; margin-left: auto; fill: currentColor; }
.menu .tight .ico { width: 24px; margin-right: 4px; font-size: 20px; }
.orange { background: #ff851b; }
.rose { background: #bc8f8f; }
.orchid { background: #d483d9; }
.sage { background: #6da294; }
.yellow { background: #ff0; }
.steel { background: #8eaed5; }
.pink { background: #e6186d; }
.teal { background: #2f98c1; }
.violet { background: #605ca8; color: #111; }

/* Sub navigation */
.content { flex: 1; min-width: 0; padding: 6px 1px 0 6px; }
.subnav {
  display: flex;
  align-items: center;
  gap: 39px;
  height: 68px;
  padding: 0 19px;
  border: 1px solid #e7e8ea;
  border-radius: 4px;
  background: #fff;
  color: #777;
}
.subnav-brand { display: flex; align-items: center; gap: 5px; font-size: 22px; }
.subnav-brand .ico { font-size: 25px; }

/* Cards */
.board {
  display: grid;
  grid-template-columns: repeat(3, minmax(0, 1fr));
  column-gap: 40px;
  padding: 26px 14px 0 14px;
}
.card {
  min-height: 357px;
  border-radius: 6px;
  background: #fff;
  box-shadow: 2px 2px 5px rgba(60, 70, 110, .1);
}
.card-wide { grid-column: span 2; }
.row-last { margin-top: 40px; }
.card-title {
  display: flex;
  align-items: center;
  gap: 3px;
  height: 81px;
  margin: 0;
  padding: 0 32px 6px;
  border-bottom: 1px solid #f1f2f4;
  color: #1f2352;
  font-size: 22px;
  font-weight: 500;
}
.card-title .ico { margin-top: 4px; color: #333; font-size: 19px; }
.ico.narrow { width: 17px; }
.ico.mid { width: 24px; }
.ico.slim { width: 15px; }
.card-body { padding: 14px 13px 8px; }

.grid { width: 100%; border-collapse: collapse; table-layout: fixed; }
.grid th, .grid td { height: 50px; padding: 0 11px; text-align: left; }
.grid th { font-weight: 700; }
.grid .none { text-align: center; }
.heads { border-bottom: 2px solid #f1f2f4; }
.band { background: #f7f7f7; }
.grid .spacer td { height: 48px; border-top: 1px solid #f1f2f4; }
.totals { border-bottom: 1px solid #f4f5f7; }
.grid .totals td { height: 103px; padding: 12px 11px 0; vertical-align: top; }
.totals b, .amount { display: block; white-space: nowrap; }
.amount { margin-top: 16px; color: #2dce89; font-size: 22px; font-weight: 500; }
.col-department { width: 66%; }
.col-employee { width: 193px; }
.col-in { width: 163px; }
.col-user { width: 155px; }

.payroll { display: flex; justify-content: center; padding: 39px 0 27px; }
.btn-payroll {
  display: flex;
  align-items: center;
  gap: 4px;
  height: 62px;
  padding: 0 22px 2px;
  border: 1px solid #2bc180;
  border-radius: 3px;
  background: #2dce89;
  color: #fff;
  font-size: 21px;
  font-weight: 500;
}
.btn-payroll .ico { font-size: 25px; }
.divider { grid-column: 1 / -1; width: 100%; height: 2px; margin: 0 0 27px; border: 0; background: #73777f; }

.stat {
  display: flex;
  align-items: flex-start;
  gap: 16px;
  height: 120px;
  margin-bottom: 38px;
  padding: 15px 16px;
  border-radius: 4px;
  box-shadow: 2px 2px 3px rgba(60, 70, 110, .08);
}
.stat-icon {
  display: flex;
  align-items: center;
  justify-content: center;
  width: 86px;
  height: 86px;
  border-radius: 50%;
  background: #11cdef;
  color: #fff;
  font-size: 44px;
}
.stat-text { display: flex; flex-direction: column; gap: 12px; padding-top: 6px; }
.stat-label { color: #8898aa; font-size: 16px; font-weight: 500; }
.stat-value { font-size: 22px; font-weight: 700; }

/* Sales targets */
.card-body.sales { padding: 27px 32px; }
.exports { display: flex; width: max-content; border: 1px solid #ddd; border-radius: 4px; background: #f4f4f4; color: #333; }
.exports button { display: flex; align-items: center; gap: 2px; height: 38px; padding: 0 12px; font-size: 15px; }
.exports button + button { border-left: 1px solid #ddd; }
.exports .ico { font-size: 16px; }
.exports .ico.slim { width: 13px; }
.sortable th div { display: flex; align-items: center; justify-content: space-between; }
.sortable .heads th { height: 58px; padding-top: 8px; }
.sort { width: 20px; height: 20px; fill: #dcdee2; }
.sort.on { fill: #a8adb8; }
.summary { margin: 12px 0 0; }
```
